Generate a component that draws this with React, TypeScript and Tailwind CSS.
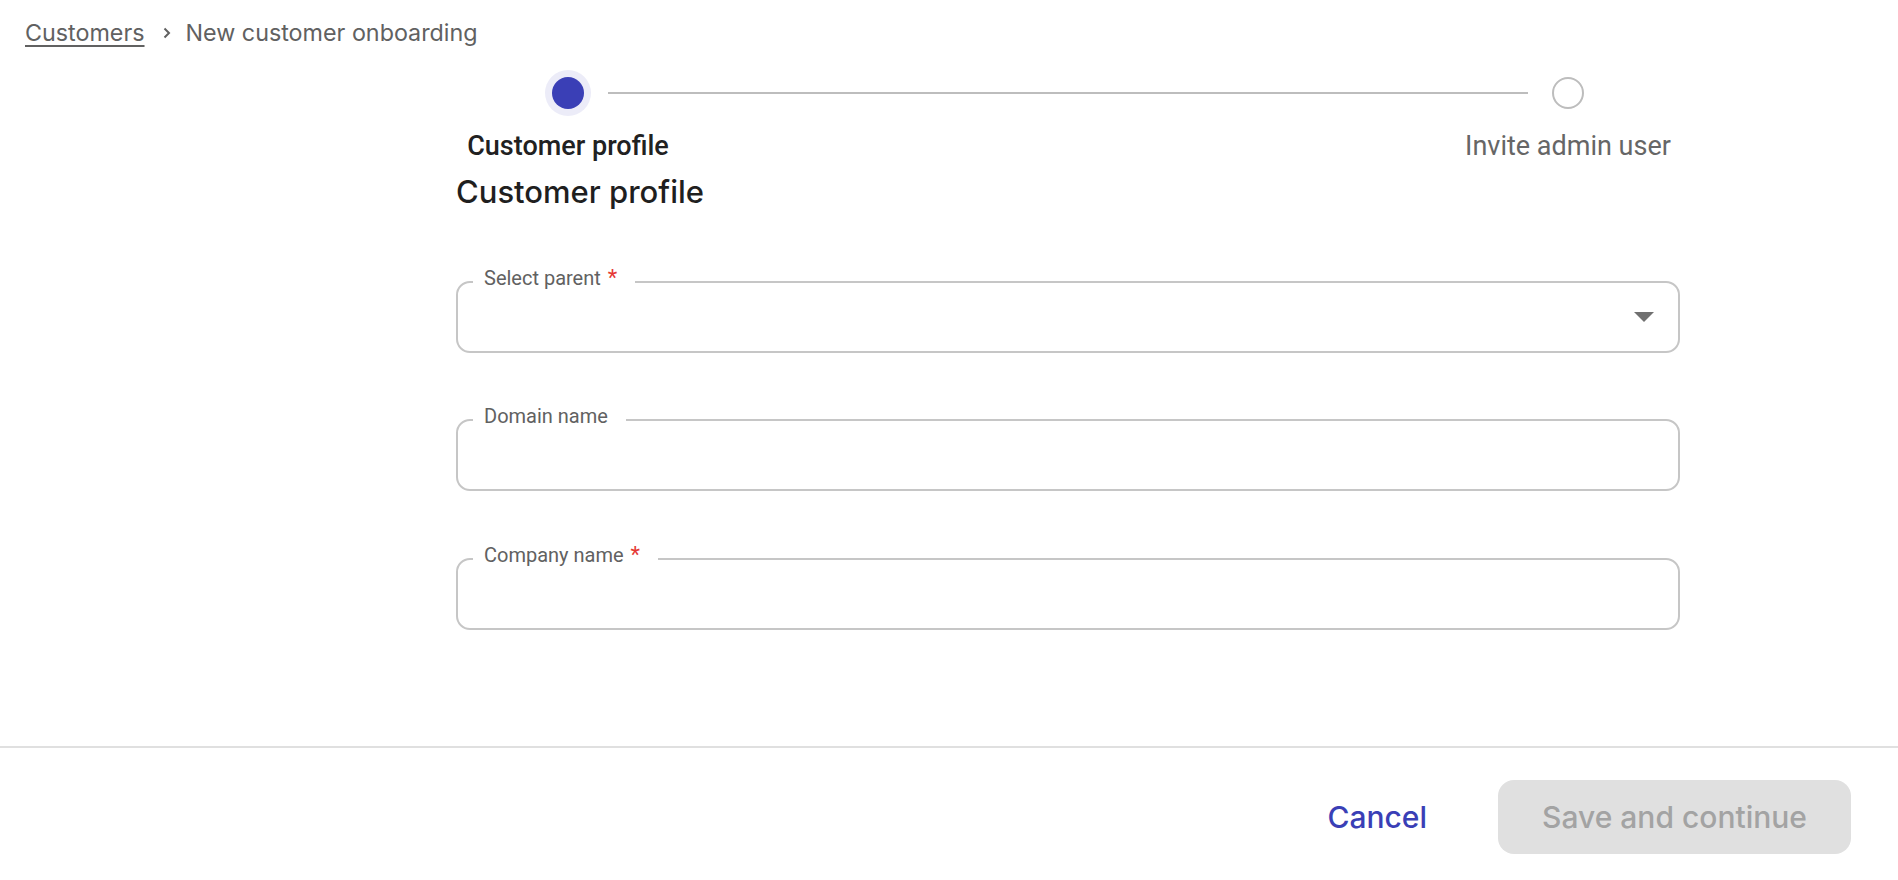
import React from 'react';

type FieldProps = {
  label: string;
  required?: boolean;
  select?: boolean;
  className?: string;
};

const Field: React.FC<FieldProps> = ({ label, required, select, className }) => (
  <div className={`relative flex h-[72px] items-center justify-end rounded-[14px] border-2 border-[#c6c6c6] pr-[24px] ${className ?? ''}`}>
    <span className="absolute left-[15px] top-[-17px] bg-white pl-[11px] pr-[18px] font-['Roboto',sans-serif] text-[20px] leading-[24px] text-[#616161]">
      {label}
      {required && <span className="ml-[7px] text-[22px] text-[#e53935]">*</span>}
    </span>
    {select && (
      <svg width="20" height="10" viewBox="0 0 20 10" aria-hidden>
        <path d="M0 0 L20 0 L10 10 Z" fill="#707070" />
      </svg>
    )}
  </div>
);

const App: React.FC = () => {
  return (
    <div className="flex h-[880px] w-full flex-col bg-white">
      {/* Breadcrumb */}
      <div className="flex items-center px-[25px] pt-[17px] font-['Inter',sans-serif] text-[23.3px] leading-[32px] text-[#616161]">
        <a className="underline decoration-[1.5px] underline-offset-[4px]">Customers</a>
        <svg className="ml-[18px] mr-[15px]" width="8" height="12" viewBox="0 0 8 12" aria-hidden>
          <path d="M1.5 1.5 L6 6 L1.5 10.5" fill="none" stroke="#616161" strokeWidth="2" />
        </svg>
        <span>New customer onboarding</span>
      </div>

      {/* Main column */}
      <div className="ml-[456px] w-[1224px] flex-1">
        {/* Stepper */}
        <div className="mt-[28px] flex items-center">
          <div className="w-[96px]" />
          <div className="h-8 w-8 rounded-full bg-[#3a3fb6] ring-[7px] ring-[#ececf8]" />
          <div className="mx-6 h-[2px] flex-1 bg-[#bdbdbd]" />
          <div className="h-8 w-8 rounded-full border-2 border-[#bdbdbd]" />
          <div className="w-[96px]" />
        </div>
        <div className="mt-[21px] flex justify-between font-['Roboto',sans-serif] text-[27px] leading-[32px]">
          <div className="w-[224px] text-center font-medium text-[#212121]">Customer profile</div>
          <div className="w-[224px] text-center text-[#666666]">Invite admin user</div>
        </div>

        <h1 className="mt-[12px] font-['Inter',sans-serif] text-[31px] font-medium leading-[36px] text-[#1f1f1f]">
          Customer profile
        </h1>

        <Field className="mt-[71px]" label="Select parent" required select />
        <Field className="mt-[66px]" label="Domain name" />
        <Field className="mt-[67px]" label="Company name" required />
      </div>

      {/* Footer */}
      <div className="flex h-[134px] items-start justify-end border-t-2 border-[#e0e0e0] pr-[47px] pt-[32px] font-['Inter',sans-serif] text-[30px] font-medium">
        <button className="mr-[71px] h-[74px] text-[#3a3fb6]">Cancel</button>
        <button className="h-[74px] w-[353px] rounded-[16px] bg-[#e0e0e0] text-[#a3a3a3]" disabled>
          Save and continue
        </button>
      </div>
    </div>
  );
};

export default App;
